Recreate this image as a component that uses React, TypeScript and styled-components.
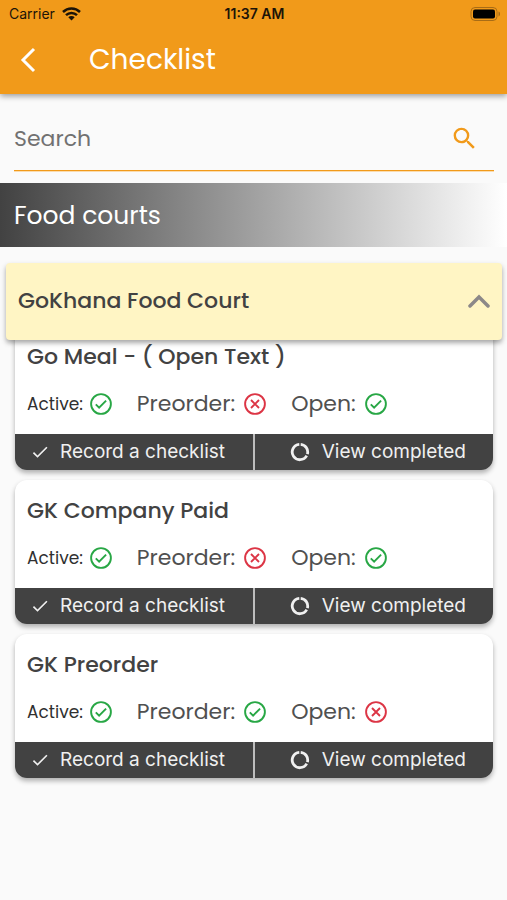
import React from "react";
import styled, { createGlobalStyle } from "styled-components";
import { MdCheck, MdSearch } from "react-icons/md";

const GlobalStyle = createGlobalStyle`
  *, *::before, *::after { box-sizing: border-box; }
  html { background: #fafafa; }
  body {
    margin: 0;
    background: #fafafa;
    color: #424242;
    font-family: Poppins, Inter, sans-serif;
  }
  button, input { font: inherit; color: inherit; }
  button { border: 0; padding: 0; background: none; cursor: pointer; }
  h1, h2, h3, ul { margin: 0; padding: 0; }
  svg { display: block; flex: none; }
`;

const Screen = styled.div`
  min-height: 100vh;
`;

const Header = styled.header`
  background: #f19a1a;
  box-shadow: 0 2px 6px rgba(0, 0, 0, 0.4);
`;

const StatusBar = styled.div`
  display: grid;
  grid-template-columns: 1fr auto 1fr;
  align-items: center;
  height: 28px;
  padding: 0 7px 0 9px;
  color: #1c1408;
  font: 14px/20px Inter, sans-serif;
`;

const Carrier = styled.div`
  display: flex;
  align-items: center;
  gap: 7px;
`;

const Clock = styled.time`
  font-weight: 600;
`;

const Battery = styled.div`
  justify-self: end;
`;

const Toolbar = styled.div`
  display: flex;
  align-items: center;
  gap: 49px;
  height: 66px;
  padding: 0 16px 2px;
  color: #fff;
`;

const BackButton = styled.button`
  display: grid;
  place-items: center;
  width: 24px;
  height: 40px;
`;

const PageTitle = styled.h1`
  font-size: 28px;
  line-height: 40px;
  font-weight: 400;
`;

const SearchBox = styled.form`
  display: flex;
  align-items: center;
  height: 65px;
  margin: 12px 13px 12px 14px;
  border-bottom: 1px solid #f19a1a;
  box-shadow: 0 1px 0 #fbdcae;
`;

const SearchInput = styled.input`
  flex: 1;
  min-width: 0;
  height: 40px;
  padding: 0;
  border: 0;
  outline: 0;
  background: none;
  font-size: 22px;

  &::placeholder {
    color: #717171;
    opacity: 1;
  }
`;

const SearchButton = styled.button`
  display: grid;
  place-items: center;
  width: 30px;
  height: 40px;
  margin-right: 15px;
  color: #f19a1a;
`;

const SectionBand = styled.h2`
  padding: 13px 14px 11px;
  background: linear-gradient(90deg, #424242, #fff);
  color: #fff;
  font-size: 25px;
  line-height: 40px;
  font-weight: 400;
`;

const Group = styled.section`
  padding: 16px 5px 16px 6px;
`;

const GroupHeader = styled.button`
  position: relative;
  z-index: 1;
  display: flex;
  align-items: center;
  justify-content: space-between;
  width: 100%;
  height: 77px;
  padding: 0 12px 2px;
  border-radius: 4px;
  background: #fff5c4;
  box-shadow: 0 3px 5px rgba(0, 0, 0, 0.35);
  font-size: 22px;
  font-weight: 500;
  text-align: left;
`;

const CardList = styled.ul`
  display: grid;
  gap: 10px;
  margin: -14px 9px 0;
  list-style: none;
`;

const Card = styled.li`
  overflow: hidden;
  border-radius: 12px;
  background: #fff;
  box-shadow: 0 3px 5px rgba(0, 0, 0, 0.3);
`;

const CardTitle = styled.h3`
  padding: 16px 12px 0;
  font-size: 22px;
  line-height: 30px;
  font-weight: 500;
`;

const Statuses = styled.div`
  display: flex;
  align-items: center;
  gap: 24px;
  height: 62px;
  padding: 2px 12px 0;
`;

const Status = styled.span<{ $small?: boolean }>`
  display: flex;
  align-items: center;
  gap: ${(p) => (p.$small ? 6 : 8)}px;
  color: ${(p) => (p.$small ? "#303030" : "#505050")};
  font-size: ${(p) => (p.$small ? 17 : 22)}px;
  line-height: 32px;
`;

const Actions = styled.div`
  display: grid;
  grid-template-columns: 1fr 1fr;
  gap: 2px;
  background: #bdbdbd;
`;

const Action = styled.button<{ $end?: boolean }>`
  display: flex;
  align-items: center;
  justify-content: ${(p) => (p.$end ? "flex-end" : "flex-start")};
  gap: ${(p) => (p.$end ? 12 : 10)}px;
  height: 36px;
  padding: ${(p) => (p.$end ? "0 27px 0 0" : "0 0 0 15px")};
  background: #424242;
  color: #f0f0f0;
  font: 19px/24px Inter, sans-serif;
  white-space: nowrap;
`;

function StateIcon({ on }: { on: boolean }) {
  return (
    <svg
      width="24"
      height="24"
      viewBox="0 0 24 24"
      fill="none"
      stroke={on ? "#28a745" : "#dc3545"}
      strokeWidth="1.9"
      role="img"
      aria-label={on ? "yes" : "no"}
    >
      <circle cx="12" cy="12" r="9.900" />
      <path d={on ? "M6.800 12.300l3.300 3.300 7-7" : "M8 8l8 8M16 8l-8 8"} />
    </svg>
  );
}

function RingIcon() {
  return (
    <svg width="20" height="20" viewBox="0 0 20 20" fill="none" stroke="currentColor" strokeWidth="2.800" aria-hidden="true">
      <path d="M10.700 2.350A7.700 7.700 0 0 1 17.400 12.100M16.700 13.700A7.700 7.700 0 1 1 9.300 2.350" />
    </svg>
  );
}

const outlets = [
  { name: "Go Meal - ( Open Text )", active: true, preorder: false, open: true },
  { name: "GK Company Paid", active: true, preorder: false, open: true },
  { name: "GK Preorder", active: true, preorder: true, open: false },
];

export default function App() {
  return (
    <Screen>
      <GlobalStyle />
      <Header>
        <StatusBar>
          <Carrier>
            Carrier
            <svg width="19" height="14" viewBox="0 0 19 14" fill="none" stroke="currentColor" strokeWidth="2.5" aria-label="Wi-Fi">
              <path d="M1 5a12.2 12.2 0 0 1 17 0M4 8.2a7.8 7.8 0 0 1 11 0" />
              <path d="M9.500 13.500L6.300 10.300a4.600 4.600 0 0 1 6.400 0z" fill="currentColor" stroke="none" />
            </svg>
          </Carrier>
          <Clock>11:37 AM</Clock>
          <Battery>
            <svg width="30" height="14" viewBox="0 0 30 14" aria-label="Battery full">
              <rect x="1" y="0.500" width="26" height="13" rx="4" fill="none" stroke="#a86c16" />
              <rect x="3" y="2.500" width="22" height="9" rx="2" fill="#000" />
              <path d="M28.500 4.500a2.700 2.700 0 0 1 0 5z" fill="#a86c16" />
            </svg>
          </Battery>
        </StatusBar>
        <Toolbar>
          <BackButton type="button" aria-label="Back">
            <svg width="16" height="26" viewBox="0 0 16 26" fill="none" stroke="currentColor" strokeWidth="3">
              <path d="M14 2L3 13l11 11" />
            </svg>
          </BackButton>
          <PageTitle>Checklist</PageTitle>
        </Toolbar>
      </Header>
      <main>
        <SearchBox role="search" onSubmit={(e) => e.preventDefault()}>
          <SearchInput type="text" placeholder="Search" aria-label="Search" />
          <SearchButton type="submit" aria-label="Submit search">
            <MdSearch size={29} />
          </SearchButton>
        </SearchBox>
        <SectionBand>Food courts</SectionBand>
        <Group>
          <GroupHeader type="button" aria-expanded="true">
            GoKhana Food Court
            <svg width="22" height="14" viewBox="0 0 22 14" fill="none" stroke="#8c8888" strokeWidth="3.500" strokeLinecap="round">
              <path d="M2 12L11 3l9 9" />
            </svg>
          </GroupHeader>
          <CardList>
            {outlets.map((o) => (
              <Card key={o.name}>
                <CardTitle>{o.name}</CardTitle>
                <Statuses>
                  <Status $small>
                    Active: <StateIcon on={o.active} />
                  </Status>
                  <Status>
                    Preorder: <StateIcon on={o.preorder} />
                  </Status>
                  <Status>
                    Open: <StateIcon on={o.open} />
                  </Status>
                </Statuses>
                <Actions>
                  <Action type="button">
                    <MdCheck size={20} />
                    Record a checklist
                  </Action>
                  <Action type="button" $end>
                    <RingIcon />
                    View completed
                  </Action>
                </Actions>
              </Card>
            ))}
          </CardList>
        </Group>
      </main>
    </Screen>
  );
}
